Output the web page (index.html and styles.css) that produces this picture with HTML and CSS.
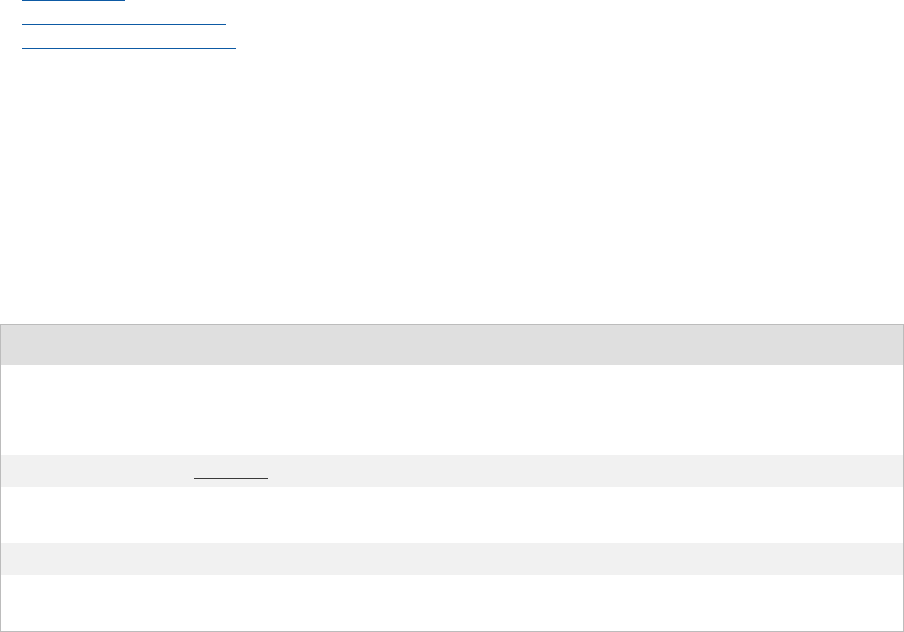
FILE: index.html
```html
<!DOCTYPE html>
<html lang="en">
<head>
<meta charset="utf-8">
<title>Page</title>
<link rel="stylesheet" href="styles.css">
</head>
<body>
<ul class="links">
  <li><a class="link w1" href="#">Overview</a></li>
  <li><a class="link w2" href="#">Installation and setup</a></li>
  <li><a class="link w3" href="#">Configuration reference</a></li>
</ul>
<div class="table">
  <div class="row head"><div class="cell c1">Name</div><div class="cell">Description</div></div>
  <div class="row r1"><div class="cell c1">Item</div><div class="cell">Details</div></div>
  <div class="row r2 alt"><div class="cell c1">Item</div><div class="cell"><a class="cell-link" href="#">See more</a></div></div>
  <div class="row r3"><div class="cell c1">Item</div><div class="cell">Details</div></div>
  <div class="row r4 alt"><div class="cell c1">Item</div><div class="cell">Details</div></div>
  <div class="row r5"><div class="cell c1">Item</div><div class="cell">Details</div></div>
</div>
</body>
</html>
```
FILE: styles.css
```css
html, body {
  margin: 0;
  padding: 0;
  background: #ffffff;
  font-family: "Liberation Sans", Arial, sans-serif;
  font-size: 14px;
}
.links {
  list-style: none;
  margin: -23px 0 0 0;
  padding: 0 0 0 22px;
  height: 324px;
  box-sizing: border-box;
  padding-top: 0;
}
.links li {
  height: 24px;
}
.link {
  display: inline-block;
  box-sizing: border-box;
  height: 24px;
  line-height: 23px;
  overflow: hidden;
  color: transparent;
  text-decoration: none;
  border-bottom: 1px solid #0d5aa4;
  white-space: nowrap;
}
.w1 { width: 103px; }
.w2 { width: 204px; }
.w3 { width: 214px; }
.links {
  height: 347px;
}
.table {
  width: 904px;
  box-sizing: border-box;
  border: 1px solid #bcbcbc;
  display: flex;
  flex-direction: column;
  color: transparent;
}
.row {
  display: flex;
  align-items: flex-start;
}
.cell {
  box-sizing: border-box;
  overflow: hidden;
  white-space: nowrap;
}
.c1 {
  width: 193px;
  flex: none;
}
.head { height: 40px; background: #dfdfdf; }
.r1 { height: 90px; }
.r2 { height: 32px; }
.r3 { height: 56px; }
.r4 { height: 32px; }
.r5 { height: 56px; }
.alt { background: #f1f1f1; }
.cell-link {
  display: inline-block;
  box-sizing: border-box;
  width: 74px;
  height: 24px;
  line-height: 23px;
  overflow: hidden;
  color: transparent;
  text-decoration: none;
  border-bottom: 1px solid #3a3a3a;
}
```
